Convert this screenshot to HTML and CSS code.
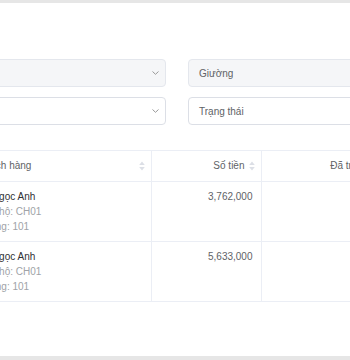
FILE: index.html
```html
<!DOCTYPE html>
<html lang="vi">
  <head>
    <title>Hóa đơn</title>
    <meta charset="utf-8" />
    <link rel="stylesheet" href="styles.css">
  </head>
  <body>
    <div class="thanh-tren"></div>
    <main class="noi-dung">
      <div class="bo-loc">
        <div class="chon xam"><span></span>
          <svg class="mui-ten" width="7" height="4" viewBox="0 0 7 4"><path d="M0.5 0.5 L3.5 3.3 L6.5 0.5" fill="none" stroke="#999" stroke-width="1"/></svg>
        </div>
        <div class="chon xam"><span>Giường</span></div>
        <div class="chon"><span></span>
          <svg class="mui-ten" width="7" height="4" viewBox="0 0 7 4"><path d="M0.5 0.5 L3.5 3.3 L6.5 0.5" fill="none" stroke="#999" stroke-width="1"/></svg>
        </div>
        <div class="chon"><span>Trạng thái</span></div>
      </div>

      <table class="bang">
        <colgroup>
          <col class="cot-khach" />
          <col class="cot-tien" />
          <col class="cot-tien2" />
        </colgroup>
        <thead>
          <tr>
            <th><div class="tieu-de">Khách hàng
              <svg class="sap-xep" width="6" height="10" viewBox="0 0 6 10"><path d="M3 0.5 L5.8 4 L0.2 4 Z M3 9.5 L5.8 6 L0.2 6 Z" fill="#dcdfe6"/></svg></div></th>
            <th><div class="tieu-de phai">Số tiền
              <svg class="sap-xep" width="6" height="10" viewBox="0 0 6 10"><path d="M3 0.5 L5.8 4 L0.2 4 Z M3 9.5 L5.8 6 L0.2 6 Z" fill="#dcdfe6"/></svg></div></th>
            <th><div class="tieu-de phai">Đã trả
              <svg class="sap-xep" width="6" height="10" viewBox="0 0 6 10"><path d="M3 0.5 L5.8 4 L0.2 4 Z M3 9.5 L5.8 6 L0.2 6 Z" fill="#dcdfe6"/></svg></div></th>
          </tr>
        </thead>
        <tbody>
          <tr>
            <td><div class="ten">Lê Ngọc Anh</div>
              <div class="phu">Căn hộ: CH01</div>
              <div class="phu">Phòng: 101</div></td>
            <td class="so">3,762,000</td>
            <td class="so"></td>
          </tr>
          <tr>
            <td><div class="ten">Lê Ngọc Anh</div>
              <div class="phu">Căn hộ: CH01</div>
              <div class="phu">Phòng: 101</div></td>
            <td class="so">5,633,000</td>
            <td class="so"></td>
          </tr>
        </tbody>
      </table>
    </main>
    <div class="thanh-duoi"></div>
  </body>
</html>
```

FILE: styles.css
```css
body {
  margin: 0;
  background: #fff;
  font-family: "Liberation Sans", Arial, sans-serif;
  font-size: 10px;
  color: #606266;
  overflow: hidden;
  width: 350px;
  height: 360px;
}

.thanh-tren {
  height: 3px;
  background: #e6e6e6;
}

.noi-dung {
  padding-top: 56px;
  margin-left: -30px;
}

.bo-loc {
  display: grid;
  grid-template-columns: 196px 196px;
  column-gap: 22px;
  row-gap: 10px;
}

.chon {
  height: 28px;
  box-sizing: border-box;
  border: 1px solid #dcdfe6;
  border-radius: 4px;
  background: #fff;
  display: flex;
  align-items: center;
  justify-content: space-between;
  padding: 0 6px 0 10px;
  color: #606266;
}

.chon.xam {
  background: #f5f6f8;
  border-color: #e4e7ed;
}

.mui-ten {
  display: block;
}

.bang {
  margin-top: 25px;
  border-collapse: collapse;
  table-layout: fixed;
  width: 404px;
}

.cot-khach { width: 181px; }
.cot-tien { width: 110px; }
.cot-tien2 { width: 113px; }

.bang th, .bang td {
  border: 1px solid #ebeef5;
  border-left: none;
}

.bang th {
  padding: 8px 6px 8px 8px;
  line-height: 14px;
  font-weight: normal;
  color: #606266;
  text-align: left;
}

.tieu-de {
  display: flex;
  align-items: center;
  justify-content: space-between;
}

.tieu-de.phai {
  justify-content: flex-end;
  gap: 4px;
}

.sap-xep {
  display: block;
}

.bang td {
  padding: 7px 8px;
  line-height: 15px;
  vertical-align: top;
}

.ten {
  color: #303133;
}

.phu {
  color: #a0a3a8;
}

.so {
  text-align: right;
  color: #606266;
}

.thanh-duoi {
  margin-top: 54px;
  height: 5px;
  background: #e6e6e6;
}
```
